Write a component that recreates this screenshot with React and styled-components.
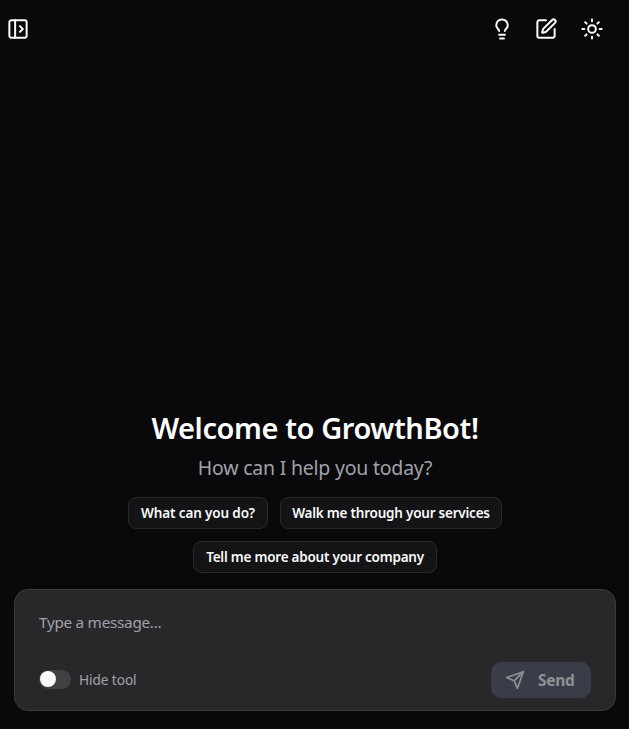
import React from "react";
import styled, { createGlobalStyle } from "styled-components";
import { PanelLeftOpen, Lightbulb, SquarePen, Sun } from "lucide-react";

const GlobalStyle = createGlobalStyle`
  * { box-sizing: border-box; }
  body {
    margin: 0;
    background: #09090b;
    font-family: "Segoe UI", "Noto Sans", "Open Sans", sans-serif;
  }
  button { font-family: inherit; margin: 0; padding: 0; }
`;

const Page = styled.div`
  display: flex;
  flex-direction: column;
  height: 729px;
  padding: 0 13px 18px 14px;
  background: #09090b;
  color: #fafafa;
  overflow: hidden;
`;

const Header = styled.header`
  display: flex;
  justify-content: space-between;
  padding-top: 17px;
  margin: 0 12px 0 -8px;
`;

const Actions = styled.div`
  display: flex;
  gap: 20px;
`;

const IconButton = styled.button`
  display: flex;
  width: 24px;
  height: 24px;
  border: 0;
  background: none;
  color: #fafafa;
  margin-right: ${({ $space }) => $space || 0}px;
  svg { transform: scale(0.96); }
`;

const Welcome = styled.main`
  flex: 1;
  display: flex;
  flex-direction: column;
  justify-content: flex-end;
  align-items: center;
  padding-bottom: 16px;
`;

const Title = styled.h1`
  margin: 0;
  font-size: 29px;
  line-height: 36px;
  font-weight: 600;
  letter-spacing: -0.41px;
  white-space: nowrap;
  color: #ffffff;
`;

const Subtitle = styled.p`
  margin: 8px 0 15px;
  font-size: 19.5px;
  line-height: 28px;
  letter-spacing: -0.22px;
  white-space: nowrap;
  color: #a1a1aa;
`;

const Suggestions = styled.div`
  display: flex;
  flex-wrap: wrap;
  justify-content: center;
  gap: 12px;
  width: 420px;
`;

const Suggestion = styled.button`
  width: ${({ $width }) => $width}px;
  height: 32px;
  padding-bottom: 1px;
  border: 1px solid #29292c;
  border-radius: 8px;
  background: #141416;
  color: #fafafa;
  font-size: 13.5px;
  font-weight: 600;
  letter-spacing: ${({ $tracking }) => $tracking}px;
  white-space: nowrap;
`;

const Composer = styled.form`
  display: flex;
  flex-direction: column;
  justify-content: space-between;
  height: 122px;
  padding: 20px 24px 12px;
  border: 1px solid #3a3a3c;
  border-radius: 14px;
  background: #28282a;
`;

const MessageInput = styled.input`
  width: 100%;
  height: 24px;
  padding: 0;
  border: 0;
  outline: 0;
  background: none;
  color: #fafafa;
  font: 400 15.3px/24px "Segoe UI", "Noto Sans", "Open Sans", sans-serif;
  letter-spacing: -0.28px;
  &::placeholder { color: #a1a1aa; opacity: 1; }
`;

const Controls = styled.div`
  display: flex;
  align-items: center;
  justify-content: space-between;
`;

const Toggle = styled.div`
  display: flex;
  align-items: center;
  gap: 8px;
`;

const Switch = styled.button`
  display: flex;
  align-items: center;
  width: 32px;
  height: 19px;
  margin-bottom: 1px;
  padding: 0 1px 1px;
  border: 0;
  border-radius: 10px;
  background: #414143;
`;

const Thumb = styled.span`
  width: 16px;
  height: 16px;
  border-radius: 50%;
  background: #fafafa;
`;

const ToggleLabel = styled.span`
  font-size: 13.7px;
  line-height: 20px;
  letter-spacing: -0.1px;
  color: #a1a1aa;
`;

const SendButton = styled.button`
  display: flex;
  align-items: center;
  gap: 13px;
  width: 100px;
  height: 36px;
  padding: 0 0 1px 14px;
  border: 0;
  border-radius: 10px;
  background: #393d47;
  color: #8f9094;
  font-size: 15.5px;
  font-weight: 700;
  letter-spacing: -0.3px;
`;

const PlaneIcon = () => (
  <svg width="20" height="20" viewBox="0 0 24 24" fill="none" stroke="currentColor" strokeWidth="2" strokeLinecap="round" strokeLinejoin="round">
    <path d="m22 2-7 20-4-9-9-4Z" />
    <path d="M22 2 11 13" />
  </svg>
);

const suggestions = [
  { text: "What can you do?", width: 140, tracking: -0.13 },
  { text: "Walk me through your services", width: 222, tracking: -0.22 },
  { text: "Tell me more about your company", width: 244, tracking: -0.23 },
];

export default function App() {
  return (
    <>
      <GlobalStyle />
      <Page>
        <Header>
          <IconButton aria-label="Open sidebar"><PanelLeftOpen size={24} strokeWidth={2.1} /></IconButton>
          <Actions>
            <IconButton aria-label="Tips"><Lightbulb size={24} strokeWidth={2.1} /></IconButton>
            <IconButton aria-label="New chat" $space={2}><SquarePen size={24} strokeWidth={2.1} /></IconButton>
            <IconButton aria-label="Theme"><Sun size={24} strokeWidth={2.1} /></IconButton>
          </Actions>
        </Header>
        <Welcome>
          <Title>Welcome to GrowthBot!</Title>
          <Subtitle>How can I help you today?</Subtitle>
          <Suggestions>
            {suggestions.map(({ text, width, tracking }) => (
              <Suggestion key={text} $width={width} $tracking={tracking}>{text}</Suggestion>
            ))}
          </Suggestions>
        </Welcome>
        <Composer onSubmit={(event) => event.preventDefault()}>
          <MessageInput placeholder="Type a message..." />
          <Controls>
            <Toggle>
              <Switch type="button" role="switch" aria-checked="false" aria-label="Hide tool"><Thumb /></Switch>
              <ToggleLabel>Hide tool</ToggleLabel>
            </Toggle>
            <SendButton type="submit"><PlaneIcon />Send</SendButton>
          </Controls>
        </Composer>
      </Page>
    </>
  );
}
